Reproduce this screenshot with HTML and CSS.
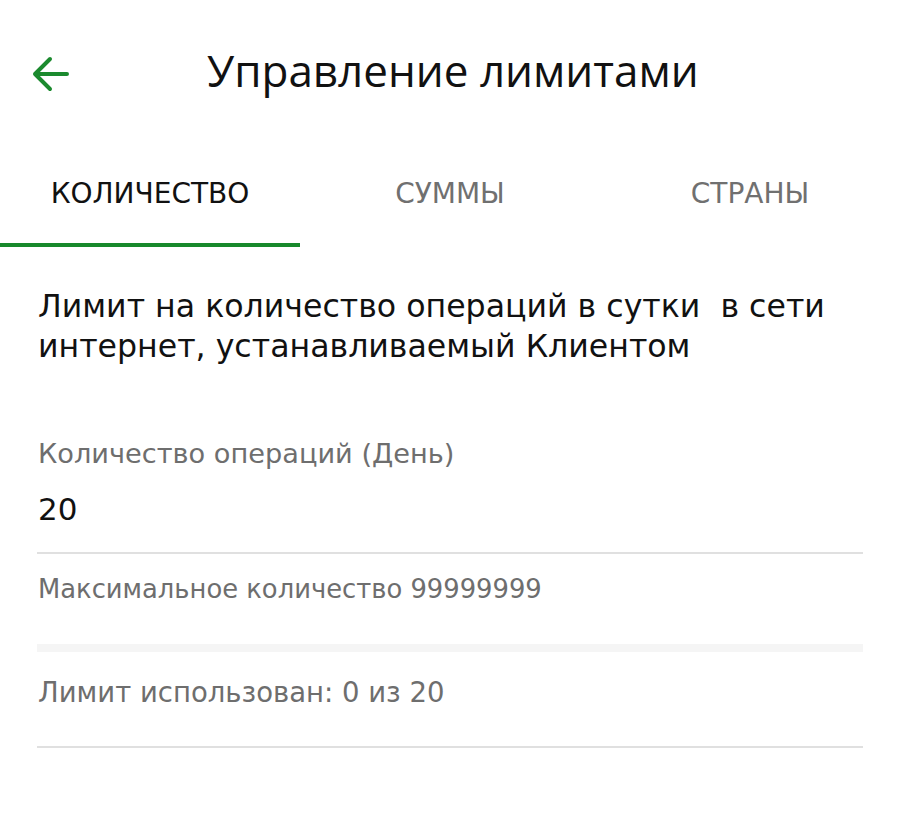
FILE: index.html
```html
<!DOCTYPE html>
<html lang="ru">
<head>
<meta charset="utf-8">
<title>Управление лимитами</title>
<link rel="stylesheet" href="styles.css">
</head>
<body>
<div class="screen">
  <header class="topbar">
    <button class="back" aria-label="Назад">
      <svg width="40" height="40" viewBox="0 0 40 40"><path d="M36 20H4M19 5L4 20l15 15" fill="none" stroke="#1b8a2e" stroke-width="4" stroke-linecap="round" stroke-linejoin="round"/></svg>
    </button>
    <h1 class="title">Управление лимитами</h1>
  </header>
  <nav class="tabs">
    <div class="tab active">КОЛИЧЕСТВО</div>
    <div class="tab">СУММЫ</div>
    <div class="tab">СТРАНЫ</div>
  </nav>
  <main class="content">
    <p class="lead">Лимит на количество операций в сутки &nbsp;в сети<br>интернет, устанавливаемый Клиентом</p>
    <div class="field">
      <div class="label">Количество операций (День)</div>
      <div class="value">20</div>
    </div>
    <div class="hint">Максимальное количество 99999999</div>
    <div class="band"></div>
    <div class="used">Лимит использован: 0 из 20</div>
  </main>
</div>
</body>
</html>
```
FILE: styles.css
```css
html, body { margin: 0; padding: 0; background: #fff; }
body {
  font-family: "DejaVu Sans", "Open Sans", sans-serif;
  color: #111;
}
.screen { width: 900px; }
.topbar {
  display: flex;
  align-items: flex-start;
  height: 150px;
  padding: 40px 0 0 31px;
  box-sizing: border-box;
}
.back {
  background: none; border: 0; padding: 0; margin: 14px 0 0 0;
  width: 40px; height: 40px; display: flex;
}
.title {
  margin: 0 0 0 136px;
  font-family: "Open Sans", sans-serif;
  font-weight: 400;
  font-size: 44px;
  line-height: normal;
  color: #111;
}
.tabs { display: flex; }
.tab {
  flex: 1;
  height: 97px;
  box-sizing: border-box;
  padding-top: 26px;
  text-align: center;
  font-size: 28px;
  line-height: 36px;
  color: #707070;
}
.tab.active {
  color: #111;
  border-bottom: 4px solid #17892b;
}
.content { padding: 39px 37px 0 37px; }
.lead {
  margin: 0;
  font-size: 31.6px;
  line-height: 40px;
  padding-left: 1px;
  color: #111;
}
.field {
  margin-top: 70px;
  border-bottom: 2px solid #e0e0e0;
  padding: 0 0 23px 1px;
}
.label { font-size: 27.2px; color: #6e6e6e; line-height: 36px; }
.value { font-size: 31px; color: #111; line-height: 40px; margin-top: 17px; }
.hint {
  font-size: 25.8px; color: #6e6e6e; line-height: 34px;
  margin-top: 18px; padding-left: 1px;
}
.band { height: 8px; background: #f5f5f5; margin-top: 38px; }
.used {
  font-size: 27.5px; color: #6e6e6e; line-height: 36px;
  padding: 22px 0 36px 1px;
  border-bottom: 2px solid #e0e0e0;
}
```
